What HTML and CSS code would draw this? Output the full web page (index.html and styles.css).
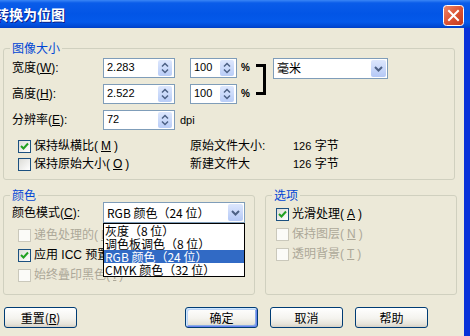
FILE: index.html
```html
<!DOCTYPE html>
<html lang="zh-CN">
<head>
    <meta charset="UTF-8">
    <title>转换为位图</title>
    <link rel="stylesheet" href="styles.css">
</head>
<body>

<div class="window">
    <div class="titlebar">
        <span class="title">转换为位图</span>
        <svg class="close" width="21" height="21" viewBox="0 0 21 21">
            <defs>
                <linearGradient id="closeFill" x1="0" y1="0" x2="1" y2="1">
                    <stop offset="0" stop-color="#ec8a6c"/>
                    <stop offset="0.5" stop-color="#dd5434"/>
                    <stop offset="1" stop-color="#c1381b"/>
                </linearGradient>
            </defs>
            <rect x="0.5" y="0.5" width="20" height="20" rx="3" fill="url(#closeFill)" stroke="#fff"/>
            <path d="M6 6 L15 15 M15 6 L6 15" stroke="#fff" stroke-width="2" stroke-linecap="square"/>
        </svg>
    </div>

    <div class="dialog">
        <!-- Image size -->
        <fieldset class="group size">
            <legend>图像大小</legend>
            <div class="size-grid">
                <span class="c-label">宽度(<u>W</u>):</span>
                <div class="spin c-main"><span class="val">2.283</span><span class="spin-btn"><svg width="14" height="16" viewBox="0 0 14 16"><path d="M4 6.5 L7 3.5 L10 6.5 M4 9.5 L7 12.5 L10 9.5" fill="none" stroke="#4d6185" stroke-width="1.5"/></svg></span></div>
                <div class="spin c-pct"><span class="val">100</span><span class="spin-btn"><svg width="14" height="16" viewBox="0 0 14 16"><path d="M4 6.5 L7 3.5 L10 6.5 M4 9.5 L7 12.5 L10 9.5" fill="none" stroke="#4d6185" stroke-width="1.5"/></svg></span></div>
                <span class="pct">%</span>
                <div class="bracket"></div>
                <div class="combo unit"><span>毫米</span><span class="drop"><svg width="15" height="17" viewBox="0 0 15 17"><path d="M4 7 L7.5 10.5 L11 7" fill="none" stroke="#4d6185" stroke-width="2"/></svg></span></div>

                <span class="c-label">高度(<u>H</u>):</span>
                <div class="spin c-main"><span class="val">2.522</span><span class="spin-btn"><svg width="14" height="16" viewBox="0 0 14 16"><path d="M4 6.5 L7 3.5 L10 6.5 M4 9.5 L7 12.5 L10 9.5" fill="none" stroke="#4d6185" stroke-width="1.5"/></svg></span></div>
                <div class="spin c-pct"><span class="val">100</span><span class="spin-btn"><svg width="14" height="16" viewBox="0 0 14 16"><path d="M4 6.5 L7 3.5 L10 6.5 M4 9.5 L7 12.5 L10 9.5" fill="none" stroke="#4d6185" stroke-width="1.5"/></svg></span></div>
                <span class="pct">%</span>

                <span class="c-label">分辨率(<u>E</u>):</span>
                <div class="spin c-main"><span class="val">72</span><span class="spin-btn"><svg width="14" height="16" viewBox="0 0 14 16"><path d="M4 6.5 L7 3.5 L10 6.5 M4 9.5 L7 12.5 L10 9.5" fill="none" stroke="#4d6185" stroke-width="1.5"/></svg></span></div>
                <span class="dpi">dpi</span>
            </div>

            <div class="size-info">
                <label class="check"><span class="box"><svg width="11" height="11" viewBox="0 0 11 11"><path d="M2 5 L4.5 7.5 L9 2.5" fill="none" stroke="#21a121" stroke-width="2"/></svg></span>保持纵横比(<u>M</u>)</label>
                <span>原始文件大小:</span>
                <span><span class="num">126</span> 字节</span>

                <label class="check"><span class="box"></span>保持原始大小(<u>O</u>)</label>
                <span>新建文件大</span>
                <span><span class="num">126</span> 字节</span>
            </div>
        </fieldset>

        <div class="lower">
            <!-- Colour -->
            <fieldset class="group color">
                <legend>颜色</legend>
                <div class="mode-row">
                    <span class="mode-label">颜色模式(<u>C</u>):</span>
                    <div class="combo mode">
                        <span>RGB 颜色（24 位）</span>
                        <span class="drop"><svg width="15" height="17" viewBox="0 0 15 17"><path d="M4 7 L7.5 10.5 L11 7" fill="none" stroke="#4d6185" stroke-width="2"/></svg></span>
                        <div class="menu">
                            <div>灰度（8 位）</div>
                            <div>调色板调色（8 位）</div>
                            <div class="sel">RGB 颜色（24 位）</div>
                            <div>CMYK 颜色（32 位）</div>
                        </div>
                    </div>
                </div>
                <div class="checks">
                    <label class="check off"><span class="box"></span>递色处理的(<u>D</u>)</label>
                    <label class="check"><span class="box"><svg width="11" height="11" viewBox="0 0 11 11"><path d="M2 5 L4.5 7.5 L9 2.5" fill="none" stroke="#21a121" stroke-width="2"/></svg></span>应用 ICC 预置文件(<u>U</u>)</label>
                    <label class="check off"><span class="box"></span>始终叠印黑色(<u>I</u>)</label>
                </div>
            </fieldset>

            <!-- Options -->
            <fieldset class="group options">
                <legend>选项</legend>
                <label class="check"><span class="box"><svg width="11" height="11" viewBox="0 0 11 11"><path d="M2 5 L4.5 7.5 L9 2.5" fill="none" stroke="#21a121" stroke-width="2"/></svg></span>光滑处理(<u>A</u>)</label>
                <label class="check off"><span class="box"></span>保持图层(<u>N</u>)</label>
                <label class="check off"><span class="box"></span>透明背景(<u>T</u>)</label>
            </fieldset>
        </div>

        <div class="buttons">
            <button class="btn reset">重置(<u>R</u>)</button>
            <button class="btn default">确定</button>
            <button class="btn">取消</button>
            <button class="btn">帮助</button>
        </div>
    </div>
</div>

</body>
</html>
```

FILE: styles.css
```css
body {
    margin: 0;
    background-color: #ece9d8;
    font-family: "Liberation Sans", "Noto Sans CJK SC", sans-serif;
    font-size: 12px;
    line-height: 14px;
    color: #000;
}
.window {
    width: 470px;
    height: 336px;
    display: flex;
    flex-direction: column;
    overflow: hidden;
}
.titlebar {
    flex: none;
    height: 28px;
    display: flex;
    align-items: center;
    justify-content: space-between;
    background: linear-gradient(#3a86f6 0, #0a5ce9 3px, #0255e6 14px, #0459ea 22px, #004ad6 26px, #003fc6 28px);
}
.title {
    margin-left: -5px;
    font-family: "Noto Sans CJK SC", sans-serif;
    font-size: 14px;
    font-weight: bold;
    color: #fff;
    text-shadow: 1px 1px #0a1e8a;
}
.close {
    display: block;
    margin: 3px 6px 0 0;
}
.dialog {
    flex: 1;
    display: flex;
    flex-direction: column;
    padding-left: 3px;
    border-right: 6px solid #0831d9;
}

/* group boxes */
.group {
    margin: 0;
    padding: 0 8px;
    border: 1px solid #d0d0bf;
    border-radius: 3px;
    min-width: 0;
    box-sizing: border-box;
}
.group legend {
    padding: 0 2px;
    margin-left: -2px;
    color: #0046d5;
    font-family: "Noto Sans CJK SC", sans-serif;
    line-height: 14px;
}
.size {
    width: 452px;
    margin-top: 13px;
    padding-top: 3px;
    padding-bottom: 6px;
}
.size-grid {
    display: grid;
    grid-template-columns: 91px 72px 15px 47px 18px 18px 115px;
    grid-template-rows: repeat(3, 20px);
    row-gap: 6px;
    align-items: center;
}
.c-label { grid-column: 1; }
.c-main { grid-column: 2; }
.c-pct { grid-column: 4; }
.pct {
    grid-column: 5;
    padding-left: 4px;
    font-size: 10px;
    font-weight: bold;
}
.bracket {
    grid-column: 6;
    grid-row: 1 / 3;
    align-self: start;
    margin: 6px 0 0 1px;
    width: 7px;
    height: 25px;
    border: 3px solid #000;
    border-left: none;
}
.unit {
    grid-column: 7;
    grid-row: 1;
}
.dpi {
    grid-column: 3 / 5;
    padding-left: 5px;
    font-size: 11px;
}

/* spin boxes and combos */
.spin {
    height: 20px;
    box-sizing: border-box;
    border: 1px solid #7f9db9;
    background-color: #fff;
    display: flex;
    align-items: center;
    justify-content: space-between;
    padding: 0 2px 0 3px;
}
.spin .val {
    font-size: 11px;
    margin-top: -3px;
}
.spin-btn {
    width: 14px;
    height: 16px;
    border-radius: 2px;
    background: linear-gradient(#dde7fd, #b9cdf7);
}
.spin-btn svg, .drop svg {
    display: block;
}
.combo {
    height: 21px;
    box-sizing: border-box;
    border: 1px solid #7f9db9;
    background-color: #fff;
    display: flex;
    align-items: center;
    justify-content: space-between;
    padding: 0 1px 0 3px;
    font-family: "Noto Sans CJK SC", sans-serif;
}
.drop {
    width: 15px;
    height: 17px;
    border-radius: 2px;
    background: linear-gradient(#dde7fd, #b4c8f6);
}

/* checkboxes */
.check {
    display: flex;
    align-items: center;
    gap: 3px;
    white-space: nowrap;
}
.box {
    flex: none;
    width: 13px;
    height: 13px;
    box-sizing: border-box;
    border: 1px solid #1c5180;
    background: linear-gradient(135deg, #dcdcd7, #fff);
}
.box svg {
    display: block;
}
.check.off {
    color: #aca899;
}
.check.off .box {
    border-color: #cac8bb;
    background: #fbfbf8;
}

.size-info {
    display: grid;
    grid-template-columns: 178px 103px auto;
    grid-auto-rows: 18px;
    align-items: center;
    margin-top: 7px;
}
.size-info .check {
    margin-left: 6px;
}
.num {
    font-size: 11px;
}

/* lower groups */
.lower {
    display: flex;
    gap: 10px;
    margin-top: 8px;
}
.color {
    width: 252px;
    padding-bottom: 9px;
}
.options {
    width: 192px;
    padding-top: 2px;
}
.mode-row {
    display: flex;
    align-items: center;
}
.mode-label {
    width: 91px;
}
.mode {
    position: relative;
    width: 142px;
}
.menu {
    position: absolute;
    left: -1px;
    top: calc(100% + 1px);
    width: 142px;
    box-sizing: border-box;
    border: 1px solid #000;
    background-color: #fff;
    z-index: 1;
}
.menu div {
    height: 13px;
    line-height: 13px;
    padding-left: 1px;
    white-space: nowrap;
}
.menu .sel {
    background-color: #316ac5;
    color: #fff;
}
.checks {
    margin-top: 2px;
}
.color .check {
    height: 20px;
    margin-left: 6px;
}
.options .check {
    height: 20px;
    margin-left: 2px;
}

/* buttons */
.buttons {
    display: flex;
    gap: 12px;
    margin-top: 12px;
    padding-left: 1px;
}
.btn {
    width: 73px;
    height: 21px;
    box-sizing: border-box;
    padding: 0;
    border: 1px solid #003c74;
    border-radius: 3px;
    background: linear-gradient(#fff, #f4f3ee 55%, #e6e3d9 85%, #d6d0c5);
    font-family: "Noto Sans CJK SC", sans-serif;
    font-size: 12px;
    color: #000;
}
.reset {
    margin-right: 96px;
}
.default {
    box-shadow: inset 1px 1px 0 #cee7ff, inset -1px -1px 0 #6982ee, inset 2px 2px 0 #bcd4f6, inset -2px -2px 0 #89ade4;
}
```
